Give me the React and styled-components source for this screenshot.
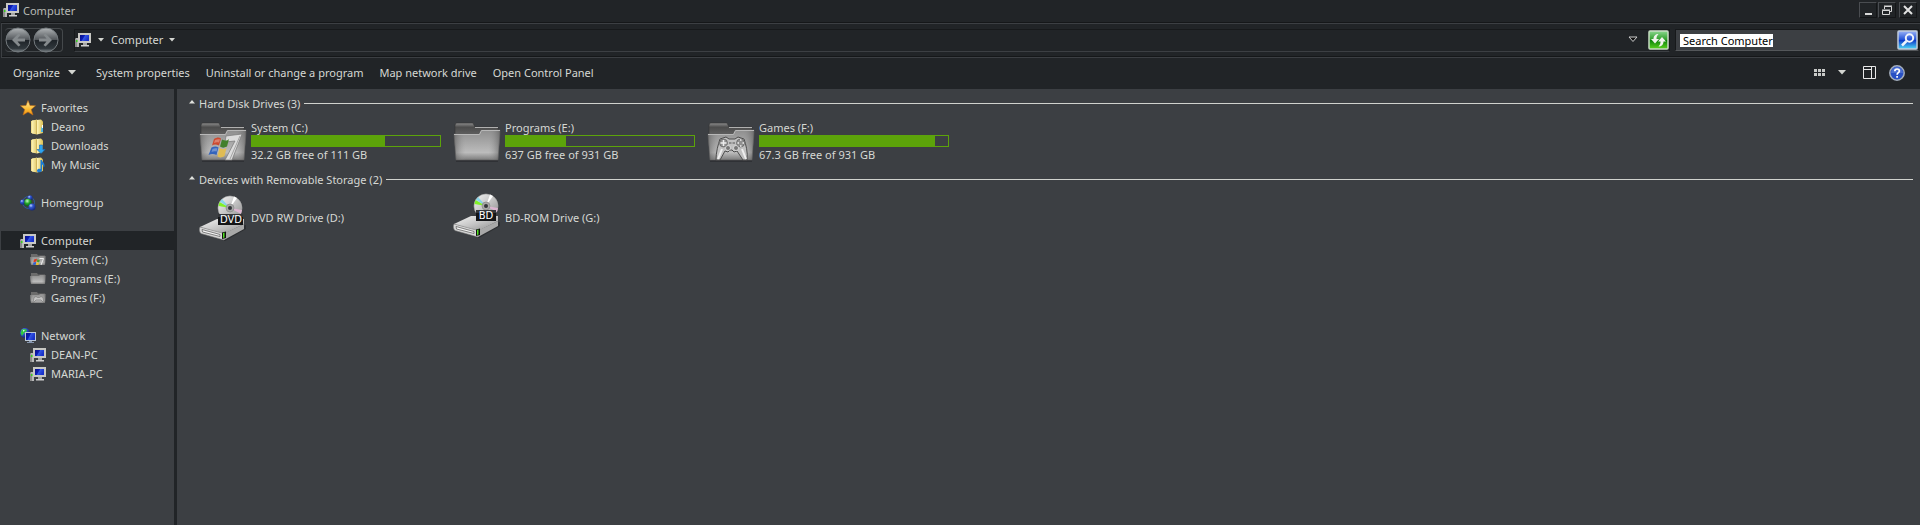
import { useState } from "react"
import styled, { createGlobalStyle } from "styled-components"

const dark = "#212427"
const panel = "#3c3f43"
const light = "#d6d8d4"
const green = "#5ca30a"

const commands = [
  "System properties",
  "Uninstall or change a program",
  "Map network drive",
  "Open Control Panel",
]

const places = [
  {
    name: "Favorites",
    icon: StarIcon,
    items: [
      { name: "Deano", icon: UserFolderIcon },
      { name: "Downloads", icon: DownloadsIcon },
      { name: "My Music", icon: MusicIcon },
    ],
  },
  { name: "Homegroup", icon: HomegroupIcon, items: [] },
  {
    name: "Computer",
    icon: ComputerIcon,
    selected: true,
    items: [
      { name: "System (C:)", icon: SmallSystemIcon },
      { name: "Programs (E:)", icon: SmallFolderIcon },
      { name: "Games (F:)", icon: SmallGamesIcon },
    ],
  },
  {
    name: "Network",
    icon: NetworkIcon,
    items: [
      { name: "DEAN-PC", icon: ComputerIcon },
      { name: "MARIA-PC", icon: ComputerIcon },
    ],
  },
]

const disks = [
  { name: "System (C:)", info: "32.2 GB free of 111 GB", used: 71, art: "windows" },
  { name: "Programs (E:)", info: "637 GB free of 931 GB", used: 32, art: "" },
  { name: "Games (F:)", info: "67.3 GB free of 931 GB", used: 93, art: "pad" },
]

const removable = [
  { name: "DVD RW Drive (D:)", label: "DVD" },
  { name: "BD-ROM Drive (G:)", label: "BD" },
]

export default function App() {
  const [search, setSearch] = useState("Search Computer")

  return (
    <Window>
      <GlobalStyle />
      <Defs />
      <TitleBar>
        <ComputerIcon />
        <Title>Computer</Title>
        <WindowButton aria-label="Minimize">
          <svg width="14" height="14">
            <path d="M4 10h7v2H4z" fill="#d8d8d8" />
          </svg>
        </WindowButton>
        <WindowButton aria-label="Restore">
          <svg width="14" height="14" fill="none" stroke="#d8d8d8">
            <path d="M4.500 6V3.500h7v5H10M4 3h8" />
            <path d="M2.500 7.500h7v4h-7zM2 7h8" />
          </svg>
        </WindowButton>
        <WindowButton aria-label="Close" $apart>
          <svg width="14" height="14" stroke="#e2e2e2" strokeWidth="2">
            <path d="M3 3l8 8M11 3l-8 8" />
          </svg>
        </WindowButton>
      </TitleBar>

      <NavBar>
        <Arrows>
          <RoundButton aria-label="Back">
            <ArrowIcon />
          </RoundButton>
          <RoundButton aria-label="Forward">
            <ArrowIcon forward />
          </RoundButton>
        </Arrows>
        <Address>
          <ComputerIcon />
          <Crumb aria-label="Locations">
            <Caret />
          </Crumb>
          <Crumb>
            Computer
            <Caret />
          </Crumb>
          <PlainButton aria-label="Previous locations">
            <svg width="10" height="7">
              <path d="M1 1h8L5 5.500z" fill="#111" stroke="#ccc" />
            </svg>
          </PlainButton>
          <PlainButton aria-label="Refresh">
            <RefreshIcon />
          </PlainButton>
        </Address>
        <SearchBox>
          <SearchInput
            aria-label="Search Computer"
            size="15"
            value={search}
            onChange={(e) => setSearch(e.target.value)}
          />
          <PlainButton aria-label="Search">
            <SearchIcon />
          </PlainButton>
        </SearchBox>
      </NavBar>

      <CommandBar>
        <Command>
          Organize
          <Caret big />
        </Command>
        {commands.map((e) => (
          <Command key={e}>{e}</Command>
        ))}
        <Tools>
          <PlainButton aria-label="Change your view">
            <svg width="11" height="7" fill="#c8cac8" shapeRendering="crispEdges">
              <path d="M0 0h3v3H0zM4 0h3v3H4zM8 0h3v3H8zM0 4h3v3H0zM4 4h3v3H4zM8 4h3v3H8z" />
            </svg>
          </PlainButton>
          <PlainButton aria-label="More options">
            <Caret big />
          </PlainButton>
          <PaneButton aria-label="Show the preview pane">
            <svg width="13" height="13" fill="none" stroke="#e8e8e8">
              <path d="M.5.5h12v12H.5zM8.500.5v12M0 3.500h8" />
            </svg>
          </PaneButton>
          <PlainButton aria-label="Get help">
            <HelpIcon />
          </PlainButton>
        </Tools>
      </CommandBar>

      <Body>
        <Sidebar>
          {places.map((group) => (
            <PlaceGroup key={group.name}>
              <Place href="#" $selected={group.selected}>
                <group.icon />
                {group.name}
              </Place>
              {group.items.map((e) => (
                <Place href="#" key={e.name} $nested>
                  <e.icon />
                  {e.name}
                </Place>
              ))}
            </PlaceGroup>
          ))}
        </Sidebar>
        <Content>
          <GroupHeader>
            <UpCaret />
            Hard Disk Drives (3)
          </GroupHeader>
          <Drives>
            {disks.map((e) => (
              <Drive key={e.name}>
                <FolderIcon art={e.art} />
                <DriveText>
                  <p>{e.name}</p>
                  <Meter>
                    <Used style={{ width: `${e.used}%` }} />
                  </Meter>
                  <p>{e.info}</p>
                </DriveText>
              </Drive>
            ))}
          </Drives>
          <GroupHeader>
            <UpCaret />
            Devices with Removable Storage (2)
          </GroupHeader>
          <Drives>
            {removable.map((e) => (
              <Drive key={e.name}>
                <DiscDriveIcon label={e.label} />
                <DriveText>
                  <p>{e.name}</p>
                </DriveText>
              </Drive>
            ))}
          </Drives>
        </Content>
      </Body>
    </Window>
  )
}

// gradients shared by all the icons
function Defs() {
  return (
    <HiddenSvg width="0" height="0">
      <defs>
        <linearGradient id="screen" x1="0" x2="1" y1="0" y2="0.4">
          <stop offset="0" stopColor="#0a1080" />
          <stop offset="0.45" stopColor="#0c1cb8" />
          <stop offset="0.55" stopColor="#3456e4" />
          <stop offset="1" stopColor="#1830c8" />
        </linearGradient>
        <linearGradient id="front" x1="0" x2="0" y1="0" y2="1">
          <stop offset="0" stopColor="#8e8e8e" />
          <stop offset="0.3" stopColor="#a0a0a0" />
          <stop offset="0.75" stopColor="#bcbcbc" />
          <stop offset="1" stopColor="#7c7c7c" />
        </linearGradient>
        <linearGradient id="sides" x1="0" x2="1" y1="0" y2="0">
          <stop offset="0" stopColor="#555" stopOpacity="0.6" />
          <stop offset="0.25" stopColor="#999" stopOpacity="0" />
          <stop offset="0.75" stopColor="#999" stopOpacity="0" />
          <stop offset="1" stopColor="#555" stopOpacity="0.6" />
        </linearGradient>
        <linearGradient id="back" x1="0" x2="0" y1="0" y2="1">
          <stop offset="0" stopColor="#8e8e8e" />
          <stop offset="0.3" stopColor="#4c4c4c" />
          <stop offset="1" stopColor="#666" />
        </linearGradient>
        <linearGradient id="yellow" x1="0" x2="1" y1="0" y2="0">
          <stop offset="0" stopColor="#fdf3b4" />
          <stop offset="0.4" stopColor="#e4cd72" />
          <stop offset="0.5" stopColor="#fbf0b0" />
          <stop offset="1" stopColor="#dcc050" />
        </linearGradient>
        <linearGradient id="orb" x1="0" x2="0" y1="0" y2="1">
          <stop offset="0" stopColor="#b0b4b6" />
          <stop offset="0.48" stopColor="#54585c" />
          <stop offset="0.52" stopColor="#1e2328" />
          <stop offset="0.85" stopColor="#30373c" />
          <stop offset="1" stopColor="#7e868a" />
        </linearGradient>
        <linearGradient id="metal" x1="0" x2="1" y1="0" y2="1">
          <stop offset="0" stopColor="#f4f4f4" />
          <stop offset="0.5" stopColor="#c4c4c4" />
          <stop offset="1" stopColor="#8a8a8a" />
        </linearGradient>
        <linearGradient id="refresh" x1="0" x2="0" y1="0" y2="1">
          <stop offset="0" stopColor="#8cd890" />
          <stop offset="0.5" stopColor="#2a9a24" />
          <stop offset="0.52" stopColor="#0c8208" />
          <stop offset="1" stopColor="#5cd420" />
        </linearGradient>
        <linearGradient id="find" x1="0" x2="0" y1="0" y2="1">
          <stop offset="0" stopColor="#9cb4f8" />
          <stop offset="0.5" stopColor="#1c4cd4" />
          <stop offset="0.52" stopColor="#0c38c8" />
          <stop offset="1" stopColor="#50dcf8" />
        </linearGradient>
        <radialGradient id="blueBall" cx="0.35" cy="0.3" r="0.7">
          <stop offset="0" stopColor="#b8d0ff" />
          <stop offset="0.4" stopColor="#3458d0" />
          <stop offset="1" stopColor="#142880" />
        </radialGradient>
        <radialGradient id="greenBall" cx="0.4" cy="0.3" r="0.7">
          <stop offset="0" stopColor="#c8f8c0" />
          <stop offset="0.5" stopColor="#20a428" />
          <stop offset="1" stopColor="#085818" />
        </radialGradient>
        <linearGradient id="star" x1="0" x2="0" y1="0" y2="1">
          <stop offset="0" stopColor="#fff0a0" />
          <stop offset="0.6" stopColor="#fcbc34" />
          <stop offset="1" stopColor="#f09010" />
        </linearGradient>
      </defs>
    </HiddenSvg>
  )
}

function Caret({ big }) {
  return big ? (
    <svg width="8" height="5">
      <path d="M0 0h8L4 4.500z" fill="#d4d6d2" />
    </svg>
  ) : (
    <svg width="6" height="4">
      <path d="M0 0h6L3 3.500z" fill="#d4d6d2" />
    </svg>
  )
}

function UpCaret() {
  return (
    <svg width="6" height="6">
      <path d="M0 3.500h6L3 0z" fill="#e0e2de" />
    </svg>
  )
}

function ComputerIcon() {
  return (
    <svg width="16" height="16">
      <path d="M0 7l1-1h3v9H1z" fill="#b8b8b8" />
      <path d="M0 7.500h2V15H0z" fill="#8c8c8c" />
      <path d="M1 8h1.500v2H1z" fill="#38d020" />
      <path d="M3 1h13v10H3z" fill="#c8c8c4" />
      <path d="M5 3h9v6H5z" fill="url(#screen)" />
      <path d="M8 11h4v2H8z" fill="#a4a4a4" />
      <path d="M6 13h8v1.500H6z" fill="#d0d0d0" />
    </svg>
  )
}

function NetworkIcon() {
  return (
    <svg width="16" height="16">
      <circle cx="5" cy="5" r="5" fill="url(#blueBall)" />
      <path d="M2 1.500l4-.5 1 2-3 2-2 3-1.500-3zM6 6l3-1v4H6z" fill="#30c840" />
      <path d="M3 2l2 0-2 2z" fill="#c8f8e0" />
      <path d="M5 4h11v9H5z" fill="#bcc8d8" />
      <path d="M6 5h9v7H6z" fill="url(#screen)" />
      <path d="M9 13h3v1h2v1H7v-1h2z" fill="#8898b0" />
    </svg>
  )
}

function StarIcon() {
  return (
    <svg width="16" height="16">
      <path
        d="M8 .5l2 5 5.500.3-4.300 3.600L13 15l-5-3-5 3 1.700-5.600L.5 5.800 6 5.500z"
        fill="url(#star)"
        stroke="#c06a14"
        strokeWidth="0.6"
      />
    </svg>
  )
}

function YellowFolder() {
  return (
    <>
      <path d="M1 2l6-1.500V15l-6-1z" fill="#f0dc8c" />
      <path d="M2 1.500l9-1 2 2V14l-6 1.500-5-1z" fill="url(#yellow)" />
      <path d="M6.500 1.500v13.500" stroke="#c4a850" strokeWidth="0.7" />
    </>
  )
}

function UserFolderIcon() {
  return (
    <svg width="16" height="16">
      <YellowFolder />
      <path d="M11.500 8h1.500v5h-2z" fill="#40b0e8" />
      <path d="M12 6h1v3h-1z" fill="#fff" />
    </svg>
  )
}

function DownloadsIcon() {
  return (
    <svg width="16" height="16">
      <YellowFolder />
      <path d="M9.500 7h3v4.500H15l-4 4-4-4h2.500z" fill="#2ca4f0" stroke="#1468b8" strokeWidth="0.6" />
    </svg>
  )
}

function MusicIcon() {
  return (
    <svg width="16" height="16">
      <YellowFolder />
      <path
        d="M10.500 3h1.500c0 2 2.500 2 2.500 5.500 0 1.500-.8 2-1 2 .2-2-.5-3-1.500-3V13c0 3-5 3-5 .8 0-2 2.500-2.300 3.500-1.800z"
        fill="#1c7cd4"
      />
    </svg>
  )
}

function HomegroupIcon() {
  return (
    <svg width="16" height="16">
      <circle cx="8.500" cy="7.500" r="6" fill="none" stroke="#2c5ca0" />
      <circle cx="10" cy="2.800" r="2.600" fill="url(#blueBall)" />
      <circle cx="2.600" cy="7" r="2.600" fill="url(#blueBall)" />
      <circle cx="8" cy="7.500" r="3.800" fill="url(#greenBall)" />
      <circle cx="12" cy="12" r="3.500" fill="url(#blueBall)" />
    </svg>
  )
}

function GreyFolder() {
  return (
    <>
      <path d="M1 2h6l1 1.500h7V12H1z" fill="#6c6c6c" />
      <path d="M0 5h9l1-1h5.500L15 13H1z" fill="url(#front)" />
      <path d="M0 5h9l1-1h5.500L15 13H1z" fill="url(#sides)" />
    </>
  )
}

function SmallFolderIcon() {
  return (
    <svg width="16" height="16">
      <GreyFolder />
    </svg>
  )
}

function SmallSystemIcon() {
  return (
    <svg width="16" height="16">
      <GreyFolder />
      <path d="M4 7.500l3-.8-.6 2.800-3 .8z" fill="#d83820" />
      <path d="M7.400 7.200l2.400 1-.6 2.400-2.400-.8z" fill="#4c9c2c" />
      <path d="M3.400 10.500l2.800-.5-.5 2.500-2.600.5z" fill="#2c5cd0" />
      <path d="M6.400 10.300l2.600.6-.6 2.100H5.900z" fill="#e8c030" />
      <path d="M9.500 6.500h4L11 13" fill="none" stroke="#eee" />
    </svg>
  )
}

function SmallGamesIcon() {
  return (
    <svg width="16" height="16">
      <GreyFolder />
      <path
        d="M3 13l1-5.500 2-1 1.500 1h2l1.500-1 2 1 1 5.500-3-3h-5z"
        fill="#c4c4c4"
        stroke="#707070"
        strokeWidth="0.6"
      />
    </svg>
  )
}

function ArrowIcon({ forward }) {
  return (
    <svg width="26" height="26">
      <circle cx="13" cy="13" r="12" fill="url(#orb)" stroke="#747a7e" />
      <path
        d={
          forward
            ? "M6 11.500h7.500l-3-3.500 2-1.500 6.500 6.500-6.500 6.500-2-1.500 3-3.500H6z"
            : "M20 11.500h-7.500l3-3.500-2-1.500L7 13l6.500 6.500 2-1.500-3-3.500H20z"
        }
        fill="#858a8d"
      />
    </svg>
  )
}

function RefreshIcon() {
  return (
    <svg width="21" height="20">
      <rect x="1" y="1" width="19" height="18" rx="1" fill="url(#refresh)" stroke="#c8dcc4" strokeWidth="1.500" />
      <path d="M10.500 4C7.500 4 5.500 6 5.500 9H3l4 4.500L11 9H8.500C8.500 7 9 5.500 10.500 4z" fill="#f0f4ec" />
      <path d="M10.500 16.500c3 0 5-2 5-5H18L14 7l-4 4.500h2.500c0 2-.5 3.500-2 5z" fill="#f0f4ec" />
    </svg>
  )
}

function SearchIcon() {
  return (
    <svg width="21" height="20">
      <rect x="1" y="1" width="19" height="18" rx="1" fill="url(#find)" stroke="#c0ccdc" strokeWidth="1.500" />
      <circle cx="12.500" cy="8" r="3.700" fill="none" stroke="#f0f4fc" strokeWidth="2" />
      <path d="M9.500 11L5 15.500" stroke="#f0f4fc" strokeWidth="2.500" />
    </svg>
  )
}

function HelpIcon() {
  return (
    <svg width="16" height="16">
      <circle cx="8" cy="8" r="7.200" fill="#2850c4" stroke="#a4aebc" strokeWidth="1.500" />
      <path d="M2 8a6 6 0 0 1 12 0z" fill="#6c8ce0" opacity="0.5" />
      <path
        d="M5.800 6.300C5.800 3.300 10.400 3.300 10.400 6c0 1.700-2.300 1.700-2.300 3.800M8.100 11v1.800"
        fill="none"
        stroke="#fff"
        strokeWidth="1.700"
      />
    </svg>
  )
}

function FolderIcon({ art }) {
  return (
    <svg width="48" height="44">
      <path d="M3 42h42" stroke="#28292c" strokeWidth="2" opacity="0.6" />
      <path d="M2 6l1-2h17l2 4h23v10H2z" fill="url(#back)" stroke="#333" strokeWidth="0.6" />
      <path d="M22 8.500h23" stroke="#b0b0b0" />
      <path d="M1 15h25l2-4h19v3l-2 27H3z" fill="url(#front)" stroke="#5a5a5a" strokeWidth="0.6" />
      <path d="M1 15h25l2-4h19v3l-2 27H3z" fill="url(#sides)" />
      <path d="M1 15.500h25.500l2-4H47" fill="none" stroke="#b8b8b8" />
      {art === "windows" && (
        <>
          <path d="M27 17l16-2-10 26h-7l10-19-10 1z" fill="#dcdcdc" stroke="#777" strokeWidth="0.7" />
          <path d="M41 17L31 40" stroke="#a4a4a4" />
          <path d="M15 20c3-2 5-2 7-.5l-2 7c-3-1.500-5-1.500-7 0z" fill="#cc4a30" />
          <path d="M23 20.500c3 1.500 5 1.500 7-.5l-2 7.500c-3 1.500-5 1.500-7 0z" fill="#42802c" />
          <path d="M12.500 28.500c3-1.500 5-1.500 7 0l-2 7.500c-3-1.500-5-1.500-8 0z" fill="#3464bc" />
          <path d="M20.500 29c3 1.500 5 1.500 7 0l-2 8c-3 2-5 1.500-7 .5z" fill="#e0bc54" />
          <path d="M16 21c2-1 4-1 5-.5l-1 3c-2-.5-3-.5-5 .5zM13.500 30c2-1 3-1 5-.5l-1 3c-2-.5-3-.5-5 .5z" fill="#fff" opacity="0.3" />
        </>
      )}
      {art === "pad" && (
        <>
          <path
            d="M9 41c0-8 2-15 4-21l6-2 3 2h6l3-2 6 2c2 6 4 13 3 21h-4l-6-9-3 1-2-2h-2l-2 2-3-1-5 9z"
            fill="#c0c0c0"
            stroke="#4c4c4c"
          />
          <path d="M11 40l4-10M39 40l-4-10" stroke="#eee" strokeWidth="2" />
          <circle cx="16.500" cy="24" r="4" fill="#909090" stroke="#555" strokeWidth="0.6" />
          <path d="M16.500 21v6M13.500 24h6" stroke="#eee" strokeWidth="1.500" />
          <circle cx="33.500" cy="24" r="4" fill="#909090" stroke="#555" strokeWidth="0.6" />
          <path d="M33 21h1.500M33 27h1.500M30.500 24H32M35.500 24H37" stroke="#eee" strokeWidth="1.500" />
          <circle cx="21" cy="29" r="2.500" fill="#777" stroke="#eee" strokeWidth="0.7" />
          <circle cx="29" cy="29" r="2.500" fill="#777" stroke="#eee" strokeWidth="0.7" />
          <path d="M22 24h2.500M25.500 24H28" stroke="#555" />
        </>
      )}
    </svg>
  )
}

function DiscDriveIcon({ label }) {
  const bd = label === "BD"
  return (
    <svg width="48" height="48" viewBox={bd ? "0 2 48 48" : "0 -1 48 48"}>
      <path d="M3 40l23 7 21-12v-4z" fill="#1c1d20" opacity="0.5" />
      <path d="M1 33l17-8h27v5L25 40z" fill="url(#metal)" />
      <path d="M1 33l24 6.500V46L2 39.500c-1.500-1-2-4.500-1-6.500z" fill="#d8d8d8" stroke="#888" strokeWidth="0.6" />
      <path d="M25 39.500L45 30v5L25 46z" fill="#a8a8a8" />
      <path d="M3 35.500l18 5v2L3.500 38z" fill="#f4f4f4" stroke="#555" strokeWidth="0.7" />
      <path d="M23 38.500l4-1v6.500l-4 1z" fill="#111" />
      <path d="M24 39l1.500-.5v5l-1.500.5z" fill="#50e020" />
      <g transform={bd ? "translate(2 1)" : undefined}>
        <circle cx="31" cy="14" r="12" fill="url(#metal)" stroke="#aaa" strokeWidth="0.6" />
        <path d="M31 14L19.500 12l1-4L31 14z" fill="#80f028" />
        <path d="M31 14L23 9l-2-1 2-3z" fill="#50d0f0" opacity="0.6" />
        <path d="M31 14l12 2-1 4z" fill="#dcb4d0" />
        <path d="M31 14l7-10-3-1.500z" fill="#fff" />
        <circle cx="31" cy="14" r="4" fill="#a8a8a8" stroke="#808080" strokeWidth="0.6" />
        <circle cx="31" cy="14" r="2" fill="#34373a" />
      </g>
      <rect x={bd ? 23 : 19} y={bd ? 19 : 20} width={bd ? 20 : 25} height="11" fill="#141517" />
      <path d={bd ? "M23 19h20v3H23z" : "M19 20h25v3H19z"} fill="#3c3e42" opacity="0.8" />
      <DiscLabel x={bd ? 33 : 32} y={bd ? 28 : 29} textAnchor="middle">
        {label}
      </DiscLabel>
    </svg>
  )
}

const GlobalStyle = createGlobalStyle`
  * {
    box-sizing: border-box;
  }
  body {
    margin: 0;
    background: ${panel};
  }
  body, button, input {
    font-family: "Noto Sans", "Open Sans", sans-serif;
    font-size: 11px;
    line-height: 15px;
    color: ${light};
  }
  p {
    margin: 0;
  }
  svg {
    display: block;
    flex-shrink: 0;
  }
`
const HiddenSvg = styled.svg`
  position: absolute;
`
const Window = styled.div`
  min-height: 100vh;
  display: flex;
  flex-direction: column;
  background: ${dark};
`
const TitleBar = styled.header`
  height: 23px;
  display: flex;
  align-items: center;
  padding: 0 3px 3px 3px;
`
const Title = styled.h1`
  flex: 1;
  margin: 0;
  padding-left: 4px;
  font-size: 11px;
  font-weight: 400;
  color: #b8bab6;
`
const PlainButton = styled.button`
  display: flex;
  align-items: center;
  gap: 4px;
  padding: 0;
  border: 0;
  background: none;
`
const WindowButton = styled(PlainButton)`
  width: 18px;
  height: 16px;
  justify-content: center;
  border: 1px solid #141618;
  border-top-color: #4a4d51;
  border-left-color: #4a4d51;
  margin-left: ${(props) => (props.$apart ? "3px" : "1px")};
`
const NavBar = styled.nav`
  height: 35px;
  display: flex;
  align-items: center;
  padding: 0 1px 1px 3px;
  margin-left: 1px;
  border: 1px solid ${panel};
  border-right: 0;
  box-shadow: inset 0 -1px #151719, 0 -1px #151719;
`
const Arrows = styled.div`
  display: flex;
  gap: 2px;
  height: 24px;
  align-items: center;
  margin-right: 11px;
  padding-right: 3px;
  border: 1px solid #44484b;
  border-left: 0;
  border-radius: 4px;
`
const RoundButton = styled(PlainButton)`
  width: 26px;
  height: 26px;
`
const Address = styled.div`
  flex: 1;
  height: 23px;
  display: flex;
  align-items: center;
  padding-bottom: 1px;
  border: 1px solid #17191b;
  border-bottom-color: ${panel};
  > :nth-last-child(2) {
    margin: 0 10px 0 auto;
  }
`
const Crumb = styled(PlainButton)`
  gap: 6px;
  margin-left: 7px;
`
const SearchBox = styled.div`
  width: 244px;
  height: 22px;
  margin-left: 5px;
  display: flex;
  align-items: center;
  justify-content: space-between;
  padding-left: 4px;
  background: ${panel};
  border: 1px solid #17191b;
  border-bottom-color: #54575a;
`
const SearchInput = styled.input`
  field-sizing: content;
  max-width: 210px;
  height: 13px;
  padding: 0 0 0 3px;
  border: 0;
  outline: 0;
  background: #fff;
  color: #000;
`
const CommandBar = styled.div`
  height: 31px;
  display: flex;
  align-items: center;
  gap: 16px;
  padding: 0 15px 2px 13px;
`
const Command = styled(PlainButton)`
  gap: 8px;
  &:first-child {
    margin-right: 4px;
  }
`
const Tools = styled.div`
  flex: 1;
  display: flex;
  align-items: center;
  justify-content: flex-end;
  gap: 13px;
`
const PaneButton = styled(PlainButton)`
  margin-left: 4px;
`
const Body = styled.div`
  flex: 1;
  display: flex;
`
const Sidebar = styled.aside`
  width: 174px;
  flex-shrink: 0;
  display: flex;
  flex-direction: column;
  gap: 19px;
  padding: 9px 0 9px 1px;
  background: ${panel};
`
const PlaceGroup = styled.div`
  display: flex;
  flex-direction: column;
`
const Place = styled.a`
  height: 19px;
  display: flex;
  align-items: center;
  gap: 5px;
  padding-left: ${(props) => (props.$nested ? "29px" : "19px")};
  background: ${(props) => (props.$selected ? dark : "none")};
  color: inherit;
  text-decoration: none;
`
const Content = styled.main`
  flex: 1;
  margin-left: 3px;
  padding: 6px 7px 8px 12px;
  background: ${panel};
`
const GroupHeader = styled.h2`
  height: 16px;
  margin: 0;
  display: flex;
  align-items: center;
  gap: 4px;
  font-size: 11px;
  font-weight: 400;
  &::after {
    content: "";
    flex: 1;
    height: 1px;
    background: #d0d2ce;
  }
`
const Drives = styled.div`
  display: grid;
  grid-template-columns: repeat(auto-fill, 254px);
  padding: 6px 0 6px 10px;
`
const Drive = styled.div`
  height: 48px;
  display: flex;
  align-items: center;
  gap: 4px;
`
const DriveText = styled.div`
  width: 190px;
`
const Meter = styled.div`
  height: 12px;
  border: 1px solid ${green};
`
const Used = styled.div`
  height: 100%;
  background: ${green};
`
const DiscLabel = styled.text`
  font-family: "DejaVu Sans", sans-serif;
  font-size: 10px;
  fill: #fff;
`
